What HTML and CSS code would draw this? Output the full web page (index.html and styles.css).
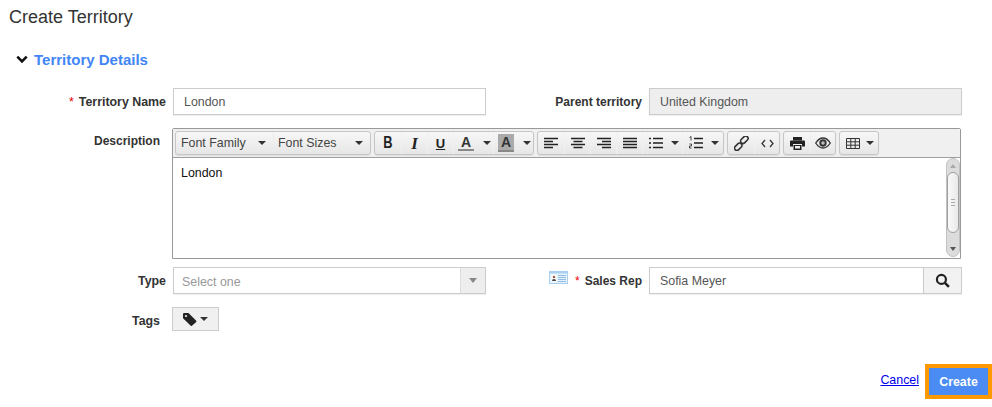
FILE: index.html
```html
<!DOCTYPE html>
<html lang="en">
<head>
<meta charset="utf-8">
<title>Create Territory</title>
<link rel="stylesheet" href="styles.css">
</head>
<body>
<h1 class="title">Create Territory</h1>
<div class="section-head">
  <svg class="chevron" width="12" height="9" viewBox="0 0 12 9"><path d="M1.300 1.700 6 6.400l4.700-4.700" fill="none" stroke="#111" stroke-width="2.600"/></svg>
  <span>Territory Details</span>
</div>
<div class="row row-name">
  <label class="label label-wide"><span class="req">*</span>Territory Name</label>
  <div class="input w-left">London</div>
  <label class="label label-right">Parent territory</label>
  <div class="input w-right disabled">United Kingdom</div>
</div>
<div class="row row-desc">
  <label class="label label-narrow">Description</label>
  <div class="editor">
    <div class="toolbar">
      <div class="group">
        <div class="select s-family">Font Family<i class="caret"></i></div>
        <div class="select s-size">Font Sizes<i class="caret"></i></div>
      </div>
      <div class="group">
        <div class="btn glyph bold"><span>B</span></div>
        <div class="btn glyph italic">I</div>
        <div class="btn glyph under">U</div>
        <div class="btn btn-c"><span class="color">A</span><i class="caret"></i></div>
        <div class="btn btn-c"><span class="color hilite">A</span><i class="caret"></i></div>
      </div>
      <div class="group">
        <div class="btn"><svg width="16" height="12" viewBox="0 0 16 12"><path d="M1 1.500h14M1 4.500h9M1 7.500h14M1 10.500h9" stroke="#222" stroke-width="1.600"/></svg></div>
        <div class="btn"><svg width="16" height="12" viewBox="0 0 16 12"><path d="M1 1.500h14M3.500 4.500h9M1 7.500h14M3.500 10.500h9" stroke="#222" stroke-width="1.600"/></svg></div>
        <div class="btn"><svg width="16" height="12" viewBox="0 0 16 12"><path d="M1 1.500h14M6 4.500h9M1 7.500h14M6 10.500h9" stroke="#222" stroke-width="1.600"/></svg></div>
        <div class="btn"><svg width="16" height="12" viewBox="0 0 16 12"><path d="M1 1.500h14M1 4.500h14M1 7.500h14M1 10.500h14" stroke="#222" stroke-width="1.600"/></svg></div>
        <div class="btn btn-c btn-list"><svg width="14" height="12" viewBox="0 0 14 12"><path d="M4 1.500h10M4 6h10M4 10.500h10" stroke="#222" stroke-width="1.300"/><path d="M0 1.500h2M0 6h2M0 10.500h2" stroke="#222" stroke-width="1.500"/></svg><i class="caret"></i></div>
        <div class="btn btn-c btn-list btn-ol"><svg width="14" height="14" viewBox="0 0 14 14"><path d="M5 2.500h9M5 7h9M5 11.500h9" stroke="#222" stroke-width="1.500"/><path d="M.5 1.500 2 .5v4M.5 8h2v2h-2v2h2" fill="none" stroke="#222" stroke-width=".8"/></svg><i class="caret"></i></div>
      </div>
      <div class="group">
        <div class="btn"><svg width="15" height="15" viewBox="0 0 16 16"><g fill="none" stroke="#333" stroke-width="1.700"><rect x="8.500" y="-.5" width="5" height="9" rx="2.300" transform="rotate(45 11 4)"/><rect x="2" y="7" width="5" height="9" rx="2.300" transform="rotate(45 4.500 11.500)"/></g></svg></div>
        <div class="btn btn-narrow"><svg width="13" height="9" viewBox="0 0 13 9"><path d="M4 1 1 4.500 4 8M9 1l3 3.500L9 8" fill="none" stroke="#333" stroke-width="1.300"/></svg></div>
      </div>
      <div class="group">
        <div class="btn"><svg width="15" height="13" viewBox="0 0 15 13"><path d="M3 0h9v3.500H3z" fill="#222"/><path d="M0 4.500a1 1 0 0 1 1-1h13a1 1 0 0 1 1 1v5h-3V7H3v2.500H0z" fill="#222"/><path d="M3.500 8h8v5h-8z" fill="#222"/><path d="M5 9h5v2.500H5z" fill="#eee"/></svg></div>
        <div class="btn btn-narrow"><svg width="16" height="12" viewBox="0 0 16 12"><path d="M.7 6C3 2.500 5.300 1 8 1s5 1.500 7.300 5C13 9.500 10.700 11 8 11S3 9.500.7 6z" fill="none" stroke="#333" stroke-width="1.300"/><circle cx="8" cy="6" r="3.700" fill="#333"/><circle cx="8" cy="6" r="1.800" fill="#bbb"/></svg></div>
      </div>
      <div class="group">
        <div class="btn btn-c btn-table"><svg width="14" height="11" viewBox="0 0 14 11"><path d="M.5.500h13v10H.5zM.5 3.800h13M.5 7.200h13M4.800.500v10M9.200.500v10" fill="none" stroke="#333"/></svg><i class="caret"></i></div>
      </div>
    </div>
    <div class="content">
      <div class="text">London</div>
      <div class="scrollbar">
        <i class="arrow up"></i>
        <div class="thumb"><b></b><b></b><b></b></div>
        <i class="arrow down"></i>
      </div>
    </div>
  </div>
</div>
<div class="row row-type">
  <label class="label label-wide label-type">Type</label>
  <div class="input w-left combo"><span class="placeholder">Select one</span><span class="combo-btn"><i class="caret caret-grey"></i></span></div>
  <div class="label label-right rep">
    <svg class="card" width="19" height="13" viewBox="0 0 19 13"><path d="M0 0h19v13H0z" fill="#a9d0f0"/><path d="M1 2.500h17V12H1z" fill="#e8f2fb"/><path d="M2.500 4h5v6.500h-5z" fill="#fff"/><circle cx="5" cy="6" r="1.300" fill="#a25a4a"/><path d="M3 10a2 2 0 0 1 4 0z" fill="#444"/><path d="M9 4.500h8M9 6.500h8M9 8.500h8M9 10.500h8" stroke="#8fbce3"/></svg>
    <span class="req">*</span>Sales Rep
  </div>
  <div class="search w-right">
    <div class="input search-field">Sofia Meyer</div>
    <div class="search-btn"><svg width="15" height="15" viewBox="0 0 14 14"><circle cx="6" cy="6" r="4.200" fill="none" stroke="#222" stroke-width="2"/><path d="m9 9 4 4" stroke="#222" stroke-width="2.400"/></svg></div>
  </div>
</div>
<div class="row row-tags">
  <label class="label label-narrow label-tags">Tags</label>
  <div class="tag-btn">
    <svg width="14" height="13" viewBox="0 0 14 13"><path d="M0 1.200A1.200 1.200 0 0 1 1.200 0h4.300L13 7.500a1.200 1.200 0 0 1 0 1.700l-3.800 3.400a1.200 1.200 0 0 1-1.700 0L0 5.300z" fill="#222"/><circle cx="3" cy="3" r="1.100" fill="#eee"/></svg>
    <i class="caret"></i>
  </div>
</div>
<div class="actions">
  <a class="cancel" href="#">Cancel</a>
  <button class="create" type="button">Create</button>
</div>
</body>
</html>
```
FILE: styles.css
```css
* { box-sizing: border-box; }
html, body { margin: 0; padding: 0; }
body {
  width: 992px;
  height: 407px;
  overflow: hidden;
  background: #fff;
  color: #333;
  font-family: "Liberation Sans", Arial, sans-serif;
  font-size: 12.4px;
}
.title {
  margin: 0;
  padding: 7px 0 0 9px;
  height: 48px;
  font-size: 18px;
  line-height: 20px;
  font-weight: 400;
  color: #333;
}
.section-head {
  display: flex;
  align-items: center;
  height: 22px;
  padding-left: 16px;
  gap: 6px;
  color: #4285f4;
  font-size: 15px;
  font-weight: 700;
}
.row { display: flex; }
.row-name { margin-top: 18px; height: 27px; align-items: center; }
.row-desc { margin-top: 13px; height: 131px; }
.row-type { margin-top: 8px; height: 27px; align-items: center; }
.row-tags { margin-top: 13px; height: 24px; align-items: center; }
.label {
  font-weight: 700;
  font-size: 12px;
  color: #333;
  text-align: right;
  white-space: nowrap;
  flex: none;
}
.label-wide { width: 166px; margin-right: 7px; font-size: 12.4px; }
.label-narrow { width: 160px; margin-right: 12px; }
.row-desc .label-narrow { padding-top: 6px; }
.label-type { padding-top: 1px; }
.label-tags { padding-top: 4px; font-size: 12.4px; }
.label-right { width: 156px; margin-right: 7px; }
.req { color: #e00; font-weight: 400; margin-right: 5px; }
.input {
  height: 27px;
  display: flex;
  align-items: center;
  padding-left: 10px;
  border: 1px solid #ccc;
  box-shadow: 0 1px 1px rgba(0, 0, 0, .06);
  background: #fff;
  color: #555;
  font-size: 12.4px;
}
.w-left { width: 313px; flex: none; }
.w-right { width: 313px; flex: none; }
.disabled { background: #eee; }
.editor {
  width: 789px;
  height: 131px;
  border: 1px solid #999;
  border-radius: 2px 2px 0 0;
  display: flex;
  flex-direction: column;
  flex: none;
}
.toolbar {
  height: 29px;
  flex: none;
  display: flex;
  gap: 3px;
  padding: 2px 0 0 2px;
  background: #f0f0f0;
  border-bottom: 1px solid #9e9e9e;
}
.group {
  height: 24px;
  display: flex;
  border: 1px solid #c6c6c6;
  border-radius: 3px;
  background: linear-gradient(#f7f7f7, #e6e6e6);
  box-shadow: 0 1px 1px rgba(0, 0, 0, .08);
}
.select {
  display: flex;
  align-items: center;
  justify-content: space-between;
  height: 22px;
  padding: 0 7px 0 5px;
  font-size: 12.4px;
  color: #444;
}
.s-family { width: 97px; }
.s-size { width: 97px; border-left: 1px solid #ececec; padding-left: 4px; }
.btn {
  width: 26px;
  height: 22px;
  display: flex;
  align-items: center;
  justify-content: center;
  color: #222;
  border-left: 1px solid #f0f0f0;
  flex: none;
}
.btn:first-child { border-left: 0; }
.btn-narrow { width: 25px; }
.btn-c { width: 40px; justify-content: flex-start; padding-left: 4px; gap: 9px; }
.btn-list { padding-left: 6px; gap: 8px; }
.btn-ol { width: 41px; padding-left: 6px; }
.btn-table { width: 38px; padding-left: 6px; gap: 6px; }
.glyph { font-size: 16px; font-weight: 700; line-height: 1; }
.bold { font-family: "Liberation Sans", sans-serif; }
.bold span { display: block; transform: scaleX(.8); }
.italic { font-family: "Liberation Serif", serif; font-style: italic; font-size: 17px; }
.under { text-decoration: underline; font-size: 13px; }
.color {
  display: block;
  width: 16px;
  height: 16px;
  line-height: 14px;
  text-align: center;
  font-size: 14px;
  font-weight: 700;
  color: #333;
  border-bottom: 2px solid #888;
}
.hilite { background: #aaa; height: 18px; line-height: 17px; }
.caret {
  display: block;
  flex: none;
  width: 0;
  height: 0;
  border-left: 4.5px solid transparent;
  border-right: 4.5px solid transparent;
  border-top: 4.5px solid #333;
}
.content { flex: 1; display: flex; justify-content: space-between; background: #fff; }
.text {
  padding: 8px 0 0 8px;
  font-size: 12.4px;
  color: #111;
}
.scrollbar {
  width: 14px;
  height: 99px;
  display: flex;
  flex-direction: column;
  align-items: center;
  background: #dcdcdc;
  border: 1px solid #c2c2c2;
  border-radius: 7px;
  position: relative;
}
.arrow { display: block; width: 0; height: 0; border-left: 3px solid transparent; border-right: 3px solid transparent; position: absolute; left: 3px; }
.up { top: 5px; border-bottom: 4px solid #aaa; }
.down { bottom: 5px; border-top: 4px solid #555; }
.thumb {
  margin-top: 13px;
  width: 12px;
  height: 61px;
  display: flex;
  flex-direction: column;
  justify-content: center;
  align-items: center;
  gap: 2px;
  background: linear-gradient(90deg, #f9f9f9, #e9e9e9);
  border: 1px solid #a0a0a0;
  border-radius: 6px;
}
.thumb b { display: block; width: 4px; height: 1px; background: #aaa; }
.combo { padding: 0 0 0 8px; justify-content: space-between; }
.placeholder { color: #999; padding-top: 2px; }
.combo-btn {
  width: 25px;
  height: 25px;
  background: #eee;
  border-left: 1px solid #ddd;
  display: flex;
  align-items: center;
  justify-content: center;
}
.caret-grey { border-top-color: #888; border-left-width: 4px; border-right-width: 4px; border-top-width: 5px; }
.rep { position: relative; }
.card { position: absolute; left: 63px; top: -3px; }
.search { display: flex; }
.search-field { flex: 1; }
.search-btn {
  width: 38px;
  height: 27px;
  background: #f2f2f2;
  border: 1px solid #ccc;
  border-left: 0;
  box-shadow: 0 1px 1px rgba(0, 0, 0, .06);
  display: flex;
  align-items: center;
  justify-content: center;
}
.tag-btn {
  width: 47px;
  height: 24px;
  display: flex;
  align-items: center;
  justify-content: center;
  gap: 3px;
  background: #f0f0f0;
  border: 1px solid #ccc;
}
.actions {
  margin-top: 33px;
  height: 35px;
  display: flex;
  justify-content: flex-end;
  align-items: center;
  gap: 6px;
}
.cancel { color: #00e; text-decoration: underline; font-size: 12.4px; margin-bottom: 3px; }
.create {
  width: 67px;
  height: 35px;
  padding: 0;
  border: 4px solid #f90;
  background: #4b8bf4;
  color: #fff;
  font-family: "Liberation Sans", sans-serif;
  font-size: 12.4px;
  font-weight: 700;
}
```
